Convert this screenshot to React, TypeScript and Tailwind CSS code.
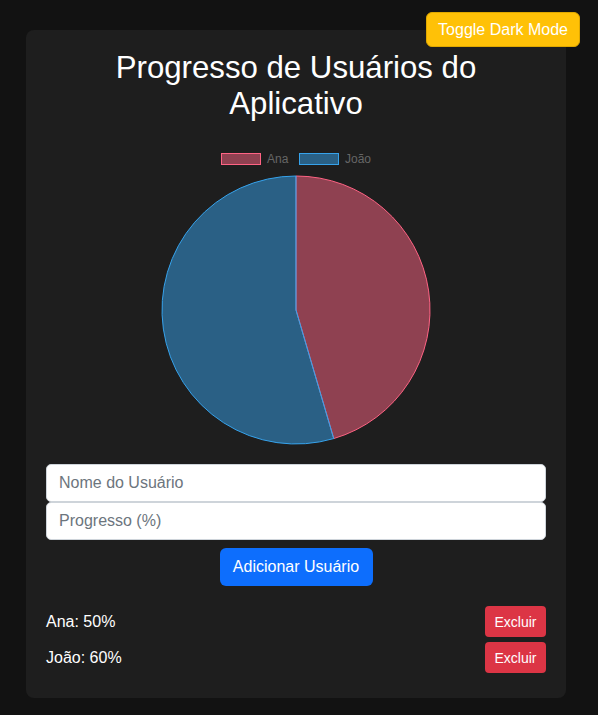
import { useState } from 'react'

interface Usuario {
  nome: string
  progresso: number
}

function PieChart({ usuarios }: { usuarios: Usuario[] }) {
  const total = usuarios.reduce((s, u) => s + u.progresso, 0)
  const cx = 250
  const cy = 168
  const r = 134
  const cores = [
    { fill: 'rgba(255,99,132,0.5)', stroke: 'rgb(255,99,132)' },
    { fill: 'rgba(54,162,235,0.5)', stroke: 'rgb(54,162,235)' },
  ]
  let angulo = 0
  const fatias = usuarios.map((u, i) => {
    const inicio = angulo
    const fim = angulo + (u.progresso / total) * Math.PI * 2
    angulo = fim
    const x1 = cx + r * Math.sin(inicio)
    const y1 = cy - r * Math.cos(inicio)
    const x2 = cx + r * Math.sin(fim)
    const y2 = cy - r * Math.cos(fim)
    const grande = fim - inicio > Math.PI ? 1 : 0
    const d = `M${cx},${cy} L${x1},${y1} A${r},${r} 0 ${grande} 1 ${x2},${y2} Z`
    return <path key={u.nome} d={d} fill={cores[i % 2].fill} stroke={cores[i % 2].stroke} strokeWidth={1} />
  })

  return (
    <svg width="500" height="304" viewBox="0 0 500 304" className="block">
      {/* legenda */}
      <rect x="175.5" y="11.5" width="39" height="11" fill={cores[0].fill} stroke={cores[0].stroke} />
      <text x="221" y="21" fontSize="12" fill="#666" fontFamily="Liberation Sans, Arial, sans-serif">Ana</text>
      <rect x="253.5" y="11.5" width="39" height="11" fill={cores[1].fill} stroke={cores[1].stroke} />
      <text x="299" y="21" fontSize="12" fill="#666" fontFamily="Liberation Sans, Arial, sans-serif">João</text>
      {fatias}
    </svg>
  )
}

export default function App() {
  const [usuarios] = useState<Usuario[]>([
    { nome: 'Ana', progresso: 50 },
    { nome: 'João', progresso: 60 },
  ])

  return (
    <div className="min-h-[715px] bg-[#121212] pt-[30px] pb-[18px] font-['Liberation_Sans',Arial,sans-serif] text-white">
      {/* botão modo escuro */}
      <button className="absolute right-[18px] top-[12px] h-[35px] w-[154px] rounded-[6px] border border-[#e0a800] bg-[#ffc107] text-base text-white">
        Toggle Dark Mode
      </button>

      {/* cartão principal */}
      <div className="ml-[26px] w-[540px] rounded-lg bg-[#1e1e1e] px-5 pt-5 pb-[25px]">
        <h1 className="mb-5 px-4 text-center text-[31.2px] leading-[36px]">Progresso de Usuários do Aplicativo</h1>

        <PieChart usuarios={usuarios} />

        <div className="mt-[18px] flex flex-col">
          <input
            placeholder="Nome do Usuário"
            className="h-[38px] w-full rounded-[5px] border border-[#ced4da] bg-white px-3 text-base text-black placeholder:text-[#6c757d]"
          />
          <input
            placeholder="Progresso (%)"
            className="h-[38px] w-full rounded-[5px] border border-[#ced4da] bg-white px-3 text-base text-black placeholder:text-[#6c757d]"
          />
        </div>

        <div className="mt-2 flex justify-center">
          <button className="h-[38px] w-[153px] rounded-[6px] bg-[#0d6efd] text-base text-white">Adicionar Usuário</button>
        </div>

        <ul className="mt-5 flex flex-col gap-[5px]">
          {usuarios.map((u) => (
            <li key={u.nome} className="flex items-center justify-between">
              <span className="text-base">
                {u.nome}: {u.progresso}%
              </span>
              <button className="h-[31px] w-[61px] rounded-[4px] bg-[#dc3545] text-sm text-white">Excluir</button>
            </li>
          ))}
        </ul>
      </div>
    </div>
  )
}
